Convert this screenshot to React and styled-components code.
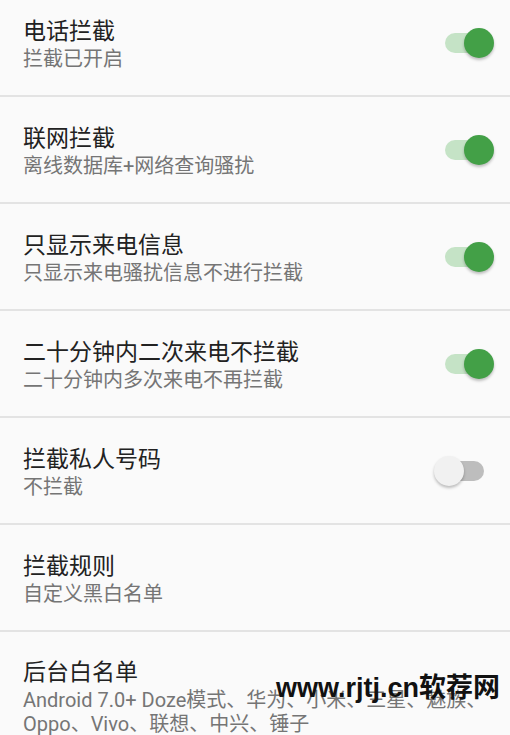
import React, { useState } from "react";
import styled, { createGlobalStyle } from "styled-components";

const Global = createGlobalStyle`
  html, body { margin: 0; padding: 0; background: #fafafa; }
  body { font-family: Roboto, "Noto Sans CJK SC", sans-serif; overflow: hidden; }
  * { box-sizing: border-box; }
`;

const Page = styled.div`
  position: relative;
  width: 510px;
  height: 735px;
  overflow: hidden;
  background: #fafafa;
`;

const List = styled.div`
  margin-top: -10px;
  display: flex;
  flex-direction: column;
`;

const Row = styled.div`
  display: flex;
  align-items: center;
  min-height: 107px;
  padding: 0 16px 0 23px;
  border-bottom: 2px solid #e3e3e3;
`;

const Texts = styled.div`
  flex: 1;
  display: flex;
  flex-direction: column;
  padding: 26px 0 23px;
`;

const Title = styled.div`
  font-size: 23px;
  line-height: 30px;
  color: #222;
`;

const Sub = styled.div`
  font-size: 20px;
  line-height: 24px;
  color: #757575;
  padding-right: 2px;
`;

const SwitchWrap = styled.div`
  position: relative;
  width: 60px;
  height: 30px;
  flex-shrink: 0;
  cursor: pointer;
`;

const Track = styled.div`
  position: absolute;
  left: 11px;
  top: 5px;
  width: 39px;
  height: 20px;
  border-radius: 10px;
  background: ${(p) => (p.$on ? "#c5e3c6" : "#bdbdbd")};
`;

const Thumb = styled.div`
  position: absolute;
  top: 0;
  left: ${(p) => (p.$on ? "30px" : "0px")};
  width: 30px;
  height: 30px;
  border-radius: 50%;
  background: ${(p) => (p.$on ? "#43a047" : "#f1f1f1")};
  box-shadow: 0 2px 3px rgba(0, 0, 0, 0.25);
`;

const Watermark = styled.div`
  position: absolute;
  left: 276px;
  top: 673px;
  font-family: "Liberation Sans", "Noto Sans CJK SC", sans-serif;
  font-size: 27px;
  line-height: 30px;
  font-weight: 700;
  color: #111;
  white-space: nowrap;
`;

function Switch({ initial }) {
  const [on, setOn] = useState(initial);
  return (
    <SwitchWrap onClick={() => setOn(!on)}>
      <Track $on={on} />
      <Thumb $on={on} />
    </SwitchWrap>
  );
}

const items = [
  { title: "电话拦截", sub: "拦截已开启", sw: true },
  { title: "联网拦截", sub: "离线数据库+网络查询骚扰", sw: true },
  { title: "只显示来电信息", sub: "只显示来电骚扰信息不进行拦截", sw: true },
  { title: "二十分钟内二次来电不拦截", sub: "二十分钟内多次来电不再拦截", sw: true },
  { title: "拦截私人号码", sub: "不拦截", sw: false },
  { title: "拦截规则", sub: "自定义黑白名单" },
  {
    title: "后台白名单",
    sub: "Android 7.0+ Doze模式、华为、小米、三星、魅族、Oppo、Vivo、联想、中兴、锤子",
  },
];

export default function App() {
  return (
    <Page>
      <Global />
      <List>
        {items.map((it) => (
          <Row key={it.title}>
            <Texts>
              <Title>{it.title}</Title>
              <Sub>{it.sub}</Sub>
            </Texts>
            {it.sw !== undefined && <Switch initial={it.sw} />}
          </Row>
        ))}
      </List>
      <Watermark>www.rjtj.cn软荐网</Watermark>
    </Page>
  );
}
